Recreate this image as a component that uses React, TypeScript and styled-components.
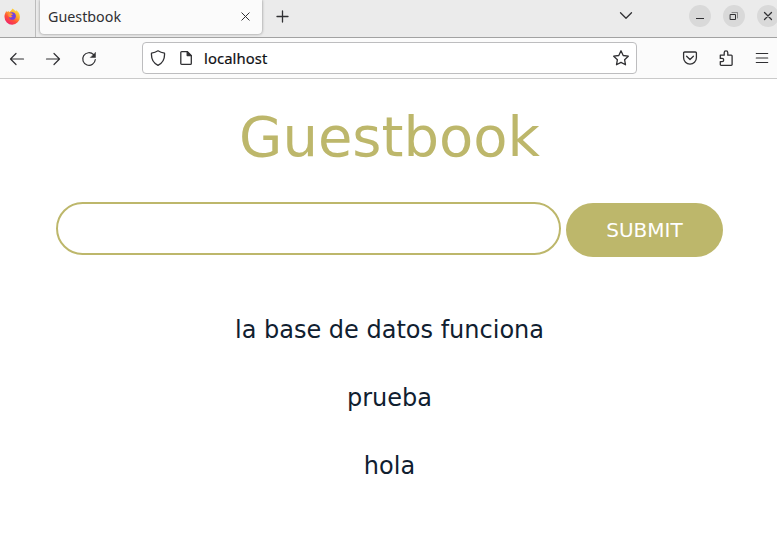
import React from "react";
import styled, { createGlobalStyle } from "styled-components";

const GlobalStyle = createGlobalStyle`
  * { box-sizing: border-box; }
  html, body { margin: 0; padding: 0; background: #fff; overflow: hidden; }
`;

const Window = styled.div`
  width: 777px;
  height: 547px;
  overflow: hidden;
  display: flex;
  flex-direction: column;
  background: #fff;
`;

const TabBar = styled.header`
  flex: none;
  height: 38px;
  display: flex;
  align-items: flex-start;
  background: #ebebeb;
  border-bottom: 1px solid #a2a2a2;
`;

const PinnedTab = styled.div`
  flex: none;
  width: 36px;
  height: 37px;
  padding: 8px 0 0 4px;
  border-right: 1px solid #bcbcbc;
`;

const Tab = styled.div`
  flex: none;
  width: 222px;
  height: 34px;
  margin-left: 4px;
  padding: 0 12px 1px 8px;
  display: flex;
  align-items: center;
  justify-content: space-between;
  background: #fbfbfb;
  border-radius: 0 0 4px 4px;
  box-shadow: 0 0 3px rgba(0, 0, 0, 0.45);
`;

const TabTitle = styled.span`
  font: 14.3px/20px "Noto Sans", sans-serif;
  color: #303033;
  white-space: nowrap;
`;

const Icon = styled.svg<{ $left?: number; $top?: number }>`
  display: block;
  flex: none;
  margin-left: ${(p) => p.$left ?? 0}px;
  margin-top: ${(p) => p.$top ?? 0}px;
  fill: none;
  stroke: #303033;
  stroke-width: 1.3;
  stroke-linecap: round;
  stroke-linejoin: round;
`;

const WindowControls = styled.div`
  flex: none;
  display: flex;
  gap: 12px;
  margin: 5px 0 0 56px;
`;

const WindowButton = styled.div`
  flex: none;
  width: 22px;
  height: 22px;
  border-radius: 50%;
  background: #d9d9d9;
`;

const Toolbar = styled.nav`
  flex: none;
  height: 41px;
  display: flex;
  align-items: center;
  background: #fbfbfb;
  border-bottom: 1px solid #cacaca;
`;

const AddressBar = styled.div`
  flex: none;
  width: 495px;
  height: 32px;
  margin-left: 45px;
  padding: 0 6px 0 7px;
  display: flex;
  align-items: center;
  background: #fff;
  border: 1px solid #bdbdbf;
  border-radius: 4px;
`;

const Address = styled.span`
  flex: 1;
  margin-left: 10px;
  font: 14.8px/20px "Noto Sans", sans-serif;
  letter-spacing: 0.1px;
  color: #101014;
  -webkit-text-stroke: 0.2px #101014;
`;

const Page = styled.main`
  display: flex;
  flex-direction: column;
  align-items: center;
  padding: 25px 54px 0 56px;
  font-family: "DejaVu Sans", sans-serif;
`;

const Title = styled.h1`
  margin: 0;
  font-size: 56px;
  line-height: 66px;
  font-weight: 400;
  color: #bdb76b;
`;

const Form = styled.form`
  width: 100%;
  margin-top: 32px;
  display: flex;
  gap: 5px;
`;

const EntryInput = styled.input`
  width: 505px;
  height: 53px;
  padding: 0 24px;
  border: 2px solid #bdb76b;
  border-radius: 27px;
  background: #fff;
  font: 20px "DejaVu Sans", sans-serif;
  color: #102030;
  outline: none;
`;

const SubmitButton = styled.button`
  width: 157px;
  height: 54px;
  margin-top: 1px;
  padding: 0;
  border: 0;
  border-radius: 27px;
  background: #bdb76b;
  color: #fff;
  font: 20px "DejaVu Sans", sans-serif;
`;

const Entries = styled.div`
  margin-top: 59px;
  display: flex;
  flex-direction: column;
  align-items: center;
  gap: 40px;
`;

const Entry = styled.p`
  margin: 0;
  font-size: 24px;
  line-height: 28px;
  color: #102030;
`;

const entries = ["la base de datos funciona", "prueba", "hola"];

function FirefoxLogo() {
  return (
    <svg width="17" height="17" viewBox="0 0 17 17" display="block">
      <defs>
        <linearGradient id="flame" x1="0.85" y1="0.05" x2="0.25" y2="1">
          <stop offset="0" stopColor="#ffe34a" />
          <stop offset="0.35" stopColor="#ffae2b" />
          <stop offset="0.65" stopColor="#ff5038" />
          <stop offset="1" stopColor="#ee2270" />
        </linearGradient>
      </defs>
      <path
        d="M1.6 4.4 2.1 2.9 3 4.1 4.7 2.9 5 4.2C6.5 3.2 7.6 2.1 8.4.4c1.3.8 2.4 1.8 3.1 2.8.5-.3.4-.9.3-1.3 2.4 1.4 4.2 3.8 4.1 7A7.7 7.7 0 0 1 .5 9C.4 7.3.8 5.7 1.6 4.4Z"
        fill="url(#flame)"
      />
      <path d="M5.2 5.2c1.2-1 2.7-1.3 4.2-.8 1.7.5 2.7 2.2 2.5 4-.2 2-1.7 3.4-3.5 3.4-1.8 0-3.2-1.2-3.4-2.9 1.4.6 2.5.5 3.4-.5-.9 0-1.6-.5-1.4-1.2.4-.4 1.2-.3 1.8-.8-.4-.6-.9-1-1.7-1.1-.6-.1-1.1-.1-1.900-.1Z" fill="#7542e0" />
      <path d="M4.800 5.300c.7-.2 1.500-.1 1.900.4.9-.1 1.600.2 1.900.8-.5.6-1.400.5-1.500 1.100.1.6.9.8 1.500.7-.8 1.200-2.200 1.400-3.400.8-.9-.9-1.100-2.500-.4-3.800Z" fill="#ff9a3c" />
    </svg>
  );
}

export default function App() {
  return (
    <Window>
      <GlobalStyle />
      <TabBar>
        <PinnedTab><FirefoxLogo /></PinnedTab>
        <Tab>
          <TabTitle>Guestbook</TabTitle>
          <Icon width="9" height="9" viewBox="0 0 9 9"><path d="M.8.8l7.400 7.400M8.200.8L.8 8.200" strokeWidth="1" /></Icon>
        </Tab>
        <Icon width="13" height="13" viewBox="0 0 13 13" $left={14} $top={10}><path d="M6.5 1v11M1 6.5h11" /></Icon>
        <Icon width="14" height="9" viewBox="0 0 14 9" $left={330} $top={11}><path d="M1.500 1.800L7 7.300l5.500-5.500" /></Icon>
        <WindowControls>
          <WindowButton>
            <Icon width="22" height="22" viewBox="0 0 22 22"><path d="M7 13.500h8" strokeWidth="1" strokeLinecap="butt" /></Icon>
          </WindowButton>
          <WindowButton>
            <Icon width="22" height="22" viewBox="0 0 22 22"><path d="M7.500 9.500h5v5h-5z" strokeWidth="1" strokeLinejoin="miter" /><path d="M9 7.500h5.500V13" strokeWidth=".8" opacity=".6" /></Icon>
          </WindowButton>
          <WindowButton>
            <Icon width="22" height="22" viewBox="0 0 22 22"><path d="M7.500 7.500l7 7M14.500 7.500l-7 7" /></Icon>
          </WindowButton>
        </WindowControls>
      </TabBar>
      <Toolbar>
        <Icon width="16" height="16" viewBox="0 0 16 16" $left={9} $top={1}><path d="M14.500 8h-13M7 2.500L1.500 8 7 13.500" strokeWidth="1.200" /></Icon>
        <Icon width="16" height="16" viewBox="0 0 16 16" $left={20} $top={1}><path d="M1.500 8h13M9 2.500L14.500 8 9 13.500" strokeWidth="1.200" /></Icon>
        <Icon width="16" height="16" viewBox="0 0 16 16" $left={20} $top={1}>
          <path d="M12.600 3.700A6.300 6.300 0 1 0 14.300 8.500" strokeWidth="1.200" />
          <path d="M14.500 1.600v4.900H9.600z" fill="#303033" strokeWidth=".5" />
        </Icon>
        <AddressBar>
          <Icon width="16" height="16" viewBox="0 0 16 16">
            <path d="M8 .8C6 2.100 3.800 2.800 1.500 3.100 1.100 8.500 3 13 8 15.300c5-2.300 6.900-6.800 6.500-12.200C12.200 2.800 10 2.100 8 .8Z" />
          </Icon>
          <Icon width="16" height="16" viewBox="0 0 16 16" $left={12}>
            <path d="M3.700 1.600h5.600L13.300 5.600v7.900a.9.900 0 0 1-.9.900H3.700a.9.900 0 0 1-.9-.9v-11a.9.900 0 0 1 .9-.9Z" />
            <path d="M9.200 1.600v4h4z" fill="#303033" />
          </Icon>
          <Address>localhost</Address>
          <Icon width="18" height="18" viewBox="0 0 18 18">
            <path d="M9 1.800l2.200 4.700 5.100.7-3.700 3.500.9 5.100L9 13.400l-4.500 2.400.9-5.100-3.700-3.500 5.100-.7z" />
          </Icon>
        </AddressBar>
        <Icon width="16" height="16" viewBox="0 0 16 16" $left={45}>
          <path d="M2.700 2h10.600a1.100 1.100 0 0 1 1.100 1.100v4.600a6.400 6.400 0 0 1-12.800 0V3.100A1.100 1.100 0 0 1 2.700 2Z" />
          <path d="M4.600 6.300L8 9.500l3.400-3.200" />
        </Icon>
        <Icon width="16" height="16" viewBox="0 0 16 16" $left={20}>
          <path d="M2.300 5.200h3.900V2.700a1.800 1.800 0 0 1 3.600 0v2.500h3.500a.8.800 0 0 1 .8.800v8.500a.8.800 0 0 1-.8.800H3.100a.8.800 0 0 1-.8-.8v-2.900h1.800a1.600 1.600 0 0 0 0-3.200H2.300z" />
        </Icon>
        <Icon width="16" height="16" viewBox="0 0 16 16" $left={20}><path d="M2.300 3.500h11.400M2.300 8h11.400M2.300 12.500h11.400" strokeWidth="1.200" /></Icon>
      </Toolbar>
      <Page>
        <Title>Guestbook</Title>
        <Form onSubmit={(event) => event.preventDefault()}>
          <EntryInput aria-label="Message" />
          <SubmitButton type="submit">SUBMIT</SubmitButton>
        </Form>
        <Entries>
          {entries.map((entry) => <Entry key={entry}>{entry}</Entry>)}
        </Entries>
      </Page>
    </Window>
  );
}
